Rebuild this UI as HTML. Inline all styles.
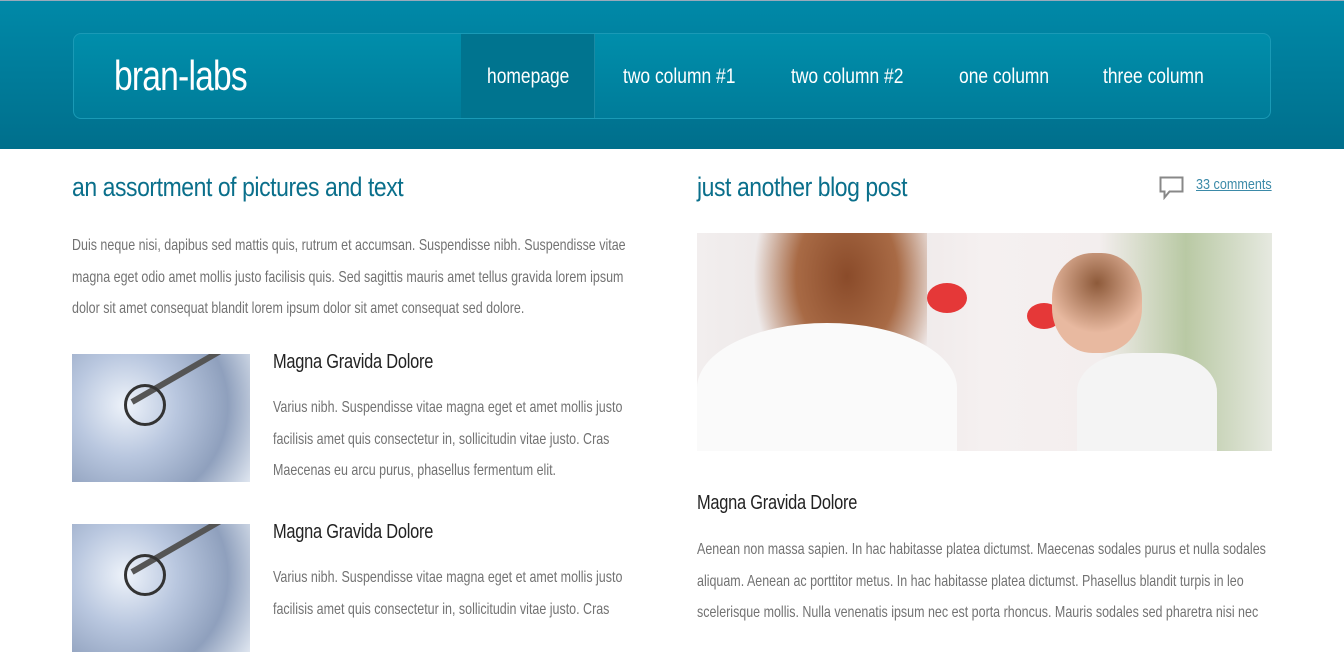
<!DOCTYPE html>
<html><head><meta charset="utf-8"><style>
*{margin:0;padding:0;box-sizing:border-box}
body{width:1344px;height:632px;overflow:hidden;background:#fff;font-family:"Liberation Sans",sans-serif;position:relative}
.c{transform:scaleX(.83);transform-origin:0 0;white-space:nowrap}
.hdr{position:absolute;left:0;top:0;width:1344px;height:149px;background:linear-gradient(#0089a8,#006f8c);border-top:1px solid #9ab}
.box{position:absolute;left:73px;top:32px;width:1198px;height:86px;border:1px solid #1a9ab6;border-radius:8px;background:linear-gradient(#008eab,#007c99)}
.logo{position:absolute;left:40px;top:18px;color:#fff;font-size:42px;letter-spacing:-1px;transform:scaleX(.8);transform-origin:0 0}
.on{position:absolute;left:387px;top:0;width:134px;height:84px;background:#00748f;border-right:1px solid #1a8aa4}
.n{position:absolute;top:31px;color:#fff;font-size:21px}
h2{position:absolute;color:#0a6f8b;font-weight:normal;font-size:27px;letter-spacing:-.5px;transform:scaleX(.85);transform-origin:0 0;white-space:nowrap}
p{position:absolute;color:#727272;font-size:16px;line-height:31.5px;transform:scaleX(.78);transform-origin:0 0}
h3{position:absolute;color:#222;font-weight:normal;font-size:20px;letter-spacing:-.3px;transform:scaleX(.82);transform-origin:0 0;white-space:nowrap}
.th{position:absolute;left:72px;width:178px;height:128px;overflow:hidden;background:radial-gradient(circle at 30% 40%,#eef3fa 0,#b9c7df 35%,#8fa0bd 70%,#dfe6f0 100%)}
.th:after{content:"";position:absolute;left:52px;top:30px;width:36px;height:36px;border:3px solid #333;border-radius:50%}
.th:before{content:"";position:absolute;left:60px;top:45px;width:140px;height:6px;background:#555;transform:rotate(-30deg);transform-origin:left}
</style></head><body>
<div class="hdr"><div class="box"><div class="logo">bran-labs</div>
<div class="on"></div>
<div class="n c" style="left:413px">homepage</div>
<div class="n c" style="left:549px">two column #1</div>
<div class="n c" style="left:717px">two column #2</div>
<div class="n c" style="left:885px">one column</div>
<div class="n c" style="left:1029px">three column</div>
</div></div>

<h2 style="left:72px;top:172px">an assortment of pictures and text</h2>
<p style="left:72px;top:230px;width:734px">Duis neque nisi, dapibus sed mattis quis, rutrum et accumsan. Suspendisse nibh. Suspendisse vitae magna eget odio amet mollis justo facilisis quis. Sed sagittis mauris amet tellus gravida lorem ipsum dolor sit amet consequat blandit lorem ipsum dolor sit amet consequat sed dolore.</p>
<div class="th" style="top:354px"></div>
<h3 style="left:273px;top:351px">Magna Gravida Dolore</h3>
<p style="left:273px;top:392px;width:480px">Varius nibh. Suspendisse vitae magna eget et amet mollis justo facilisis amet quis consectetur in, sollicitudin vitae justo. Cras Maecenas eu arcu purus, phasellus fermentum elit.</p>
<div class="th" style="top:524px"></div>
<h3 style="left:273px;top:521px">Magna Gravida Dolore</h3>
<p style="left:273px;top:562px;width:480px">Varius nibh. Suspendisse vitae magna eget et amet mollis justo facilisis amet quis consectetur in, sollicitudin vitae justo. Cras</p>

<h2 style="left:697px;top:172px">just another blog post</h2>
<svg style="position:absolute;left:1159px;top:176px" width="26" height="24"><path d="M1.5 1.5h22v14h-13l-5 6v-6h-4z" fill="none" stroke="#888" stroke-width="2"/></svg>
<a class="c" style="position:absolute;left:1196px;top:176px;color:#3b8aa8;font-size:15px;text-decoration:underline;transform:scaleX(.84)">33 comments</a>
<div style="position:absolute;left:697px;top:233px;width:575px;height:218px;background:linear-gradient(90deg,#f2eeee 0,#e9e4e4 25%,#f5f0f0 50%,#f3eeee 70%,#b9c9a4 85%,#e6e9e0 100%);overflow:hidden">
<div style="position:absolute;left:30px;top:0;width:200px;height:218px;background:radial-gradient(ellipse at 60% 20%,#8a4b2a 0,#a86a45 30%,transparent 55%)"></div>
<div style="position:absolute;left:0;top:90px;width:260px;height:130px;background:#fafafa;border-radius:50% 50% 0 0"></div>
<div style="position:absolute;left:230px;top:50px;width:40px;height:30px;border-radius:50%;background:#e53838"></div>
<div style="position:absolute;left:330px;top:70px;width:34px;height:26px;border-radius:50%;background:#e53838"></div>
<div style="position:absolute;left:355px;top:20px;width:90px;height:100px;border-radius:45%;background:radial-gradient(circle at 50% 30%,#8d5a3a 0,#e8b9a0 60%)"></div>
<div style="position:absolute;left:380px;top:120px;width:140px;height:98px;background:#f4f4f4;border-radius:40% 40% 0 0"></div>
</div>
<h3 style="left:697px;top:492px">Magna Gravida Dolore</h3>
<p style="left:697px;top:534px;width:740px">Aenean non massa sapien. In hac habitasse platea dictumst. Maecenas sodales purus et nulla sodales aliquam. Aenean ac porttitor metus. In hac habitasse platea dictumst. Phasellus blandit turpis in leo scelerisque mollis. Nulla venenatis ipsum nec est porta rhoncus. Mauris sodales sed pharetra nisi nec</p>
</body></html>
